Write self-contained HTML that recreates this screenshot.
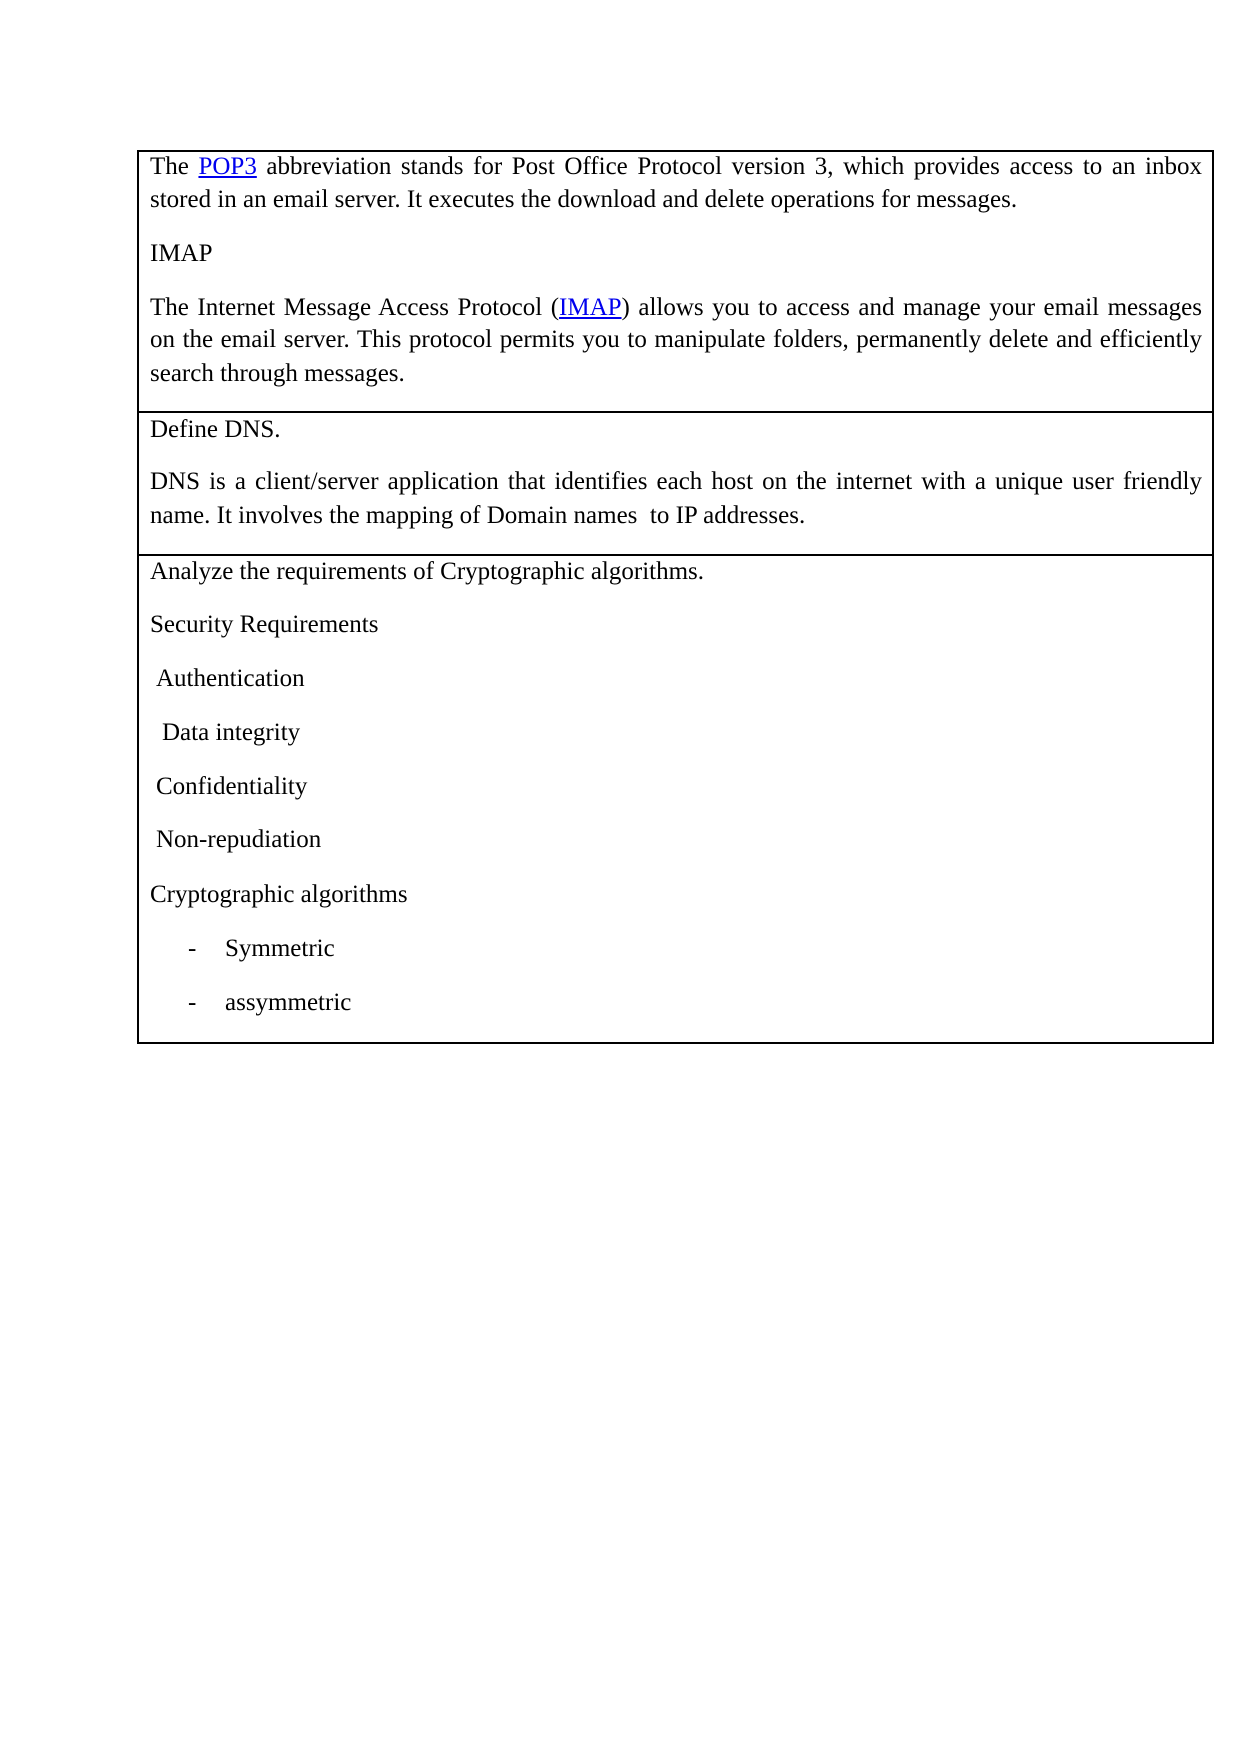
<!DOCTYPE html>
<html><head><meta charset="utf-8"><style>
body{margin:0;width:1242px;height:1755px;background:#fff;position:relative;font-family:"Liberation Serif",serif;font-size:25px;color:#000}
.b{position:absolute;background:#000}
.l{position:absolute;left:150px;width:1052px;height:34px;line-height:34px;white-space:nowrap}
.j{text-align:justify;text-align-last:justify}
a{color:#0000ee;text-decoration:underline}
</style></head><body>
<div class="b" style="left:137px;top:150px;width:2px;height:894px"></div>
<div class="b" style="left:1212px;top:150px;width:2px;height:894px"></div>
<div class="b" style="left:137px;top:150px;width:1077px;height:2px"></div>
<div class="b" style="left:137px;top:411px;width:1077px;height:2px"></div>
<div class="b" style="left:137px;top:554px;width:1077px;height:2px"></div>
<div class="b" style="left:137px;top:1042px;width:1077px;height:2px"></div>

<div class="l j" style="top:150px">The <a>POP3</a> abbreviation stands for Post Office Protocol version 3, which provides access to an inbox</div>
<div class="l" style="top:183px">stored in an email server. It executes the download and delete operations for messages.</div>
<div class="l" style="top:237px">IMAP</div>
<div class="l j" style="top:291px">The Internet Message Access Protocol (<a>IMAP</a>) allows you to access and manage your email messages</div>
<div class="l j" style="top:323px">on the email server. This protocol permits you to manipulate folders, permanently delete and efficiently</div>
<div class="l" style="top:357px">search through messages.</div>
<div class="l" style="top:413px">Define DNS.</div>
<div class="l j" style="top:465px">DNS is a client/server application that identifies each host on the internet with a unique user friendly</div>
<div class="l" style="top:499px">name. It involves the mapping of Domain names&nbsp; to IP addresses.</div>
<div class="l" style="top:555px">Analyze the requirements of Cryptographic algorithms.</div>
<div class="l" style="top:608px">Security Requirements</div>
<div class="l" style="top:662px;left:156px">Authentication</div>
<div class="l" style="top:716px;left:162px">Data integrity</div>
<div class="l" style="top:770px;left:156px">Confidentiality</div>
<div class="l" style="top:823px;left:156px">Non-repudiation</div>
<div class="l" style="top:878px">Cryptographic algorithms</div>
<div class="l" style="top:932px;left:188px">-</div>
<div class="l" style="top:932px;left:225px">Symmetric</div>
<div class="l" style="top:986px;left:188px">-</div>
<div class="l" style="top:986px;left:225px">assymmetric</div>
</body></html>
